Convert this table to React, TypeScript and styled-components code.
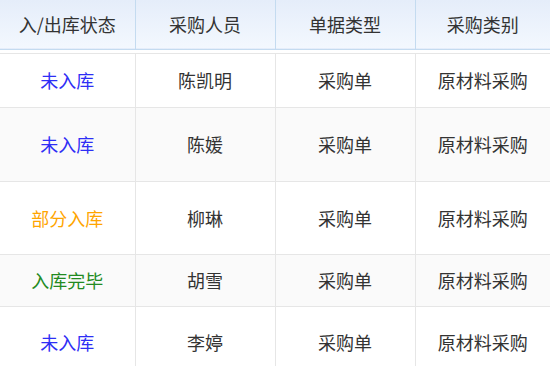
import React from 'react'
import styled, { createGlobalStyle } from 'styled-components'

const GlobalStyle = createGlobalStyle`
  html, body {
    margin: 0;
    padding: 0;
    background: #fff;
    font-family: "Noto Sans CJK SC", "Noto Sans", sans-serif;
  }
`

const Wrapper = styled.div`
  width: 550px;
  height: 366px;
  overflow: hidden;
  background: #fff;
`

const Table = styled.table`
  width: 100%;
  border-collapse: collapse;
  table-layout: fixed;
`

const HeadRow = styled.tr`
  height: 49px;
  background: linear-gradient(to bottom, #e5edfa, #f3f8fe);
  border-bottom: 1px solid #c4dbf0;
`

const HeaderCell = styled.th`
  padding: 0;
  font-weight: normal;
  font-size: 18px;
  color: #333;
  text-align: center;
  border-left: 1px solid #c4dbf0;

  &:first-child {
    border-left: none;
  }
`

const Spacer = styled.tr`
  height: 4px;
  border-bottom: 1px solid #e6e6e6;
`

const Row = styled.tr<{ $h: number; $striped: boolean }>`
  height: ${(p) => p.$h}px;
  background: ${(p) => (p.$striped ? '#fafafa' : '#fff')};
  border-bottom: 1px solid #e6e6e6;
`

const Cell = styled.td<{ $color?: string }>`
  padding: 0;
  font-size: 18px;
  text-align: center;
  color: ${(p) => p.$color || '#333'};
  border-left: 1px solid #e6e6e6;

  &:first-child {
    border-left: none;
  }
`

const statusColors: Record<string, string> = {
  未入库: '#2e2ef5',
  部分入库: '#ffa500',
  入库完毕: '#228b22',
}

const rows = [
  { status: '未入库', buyer: '陈凯明', h: 54 },
  { status: '未入库', buyer: '陈媛', h: 74 },
  { status: '部分入库', buyer: '柳琳', h: 73 },
  { status: '入库完毕', buyer: '胡雪', h: 52 },
  { status: '未入库', buyer: '李婷', h: 72 },
]

const App = () => {
  return (
    <Wrapper>
      <GlobalStyle />
      <Table>
        <colgroup>
          <col style={{ width: 135 }} />
          <col style={{ width: 140 }} />
          <col style={{ width: 140 }} />
          <col style={{ width: 135 }} />
        </colgroup>
        <thead>
          <HeadRow>
            <HeaderCell>入/出库状态</HeaderCell>
            <HeaderCell>采购人员</HeaderCell>
            <HeaderCell>单据类型</HeaderCell>
            <HeaderCell>采购类别</HeaderCell>
          </HeadRow>
        </thead>
        <tbody>
          <Spacer>
            <td colSpan={4} />
          </Spacer>
          {rows.map((row, index) => (
            <Row key={index} $h={row.h} $striped={index % 2 === 1}>
              <Cell $color={statusColors[row.status]}>{row.status}</Cell>
              <Cell>{row.buyer}</Cell>
              <Cell>采购单</Cell>
              <Cell>原材料采购</Cell>
            </Row>
          ))}
        </tbody>
      </Table>
    </Wrapper>
  )
}

export default App
